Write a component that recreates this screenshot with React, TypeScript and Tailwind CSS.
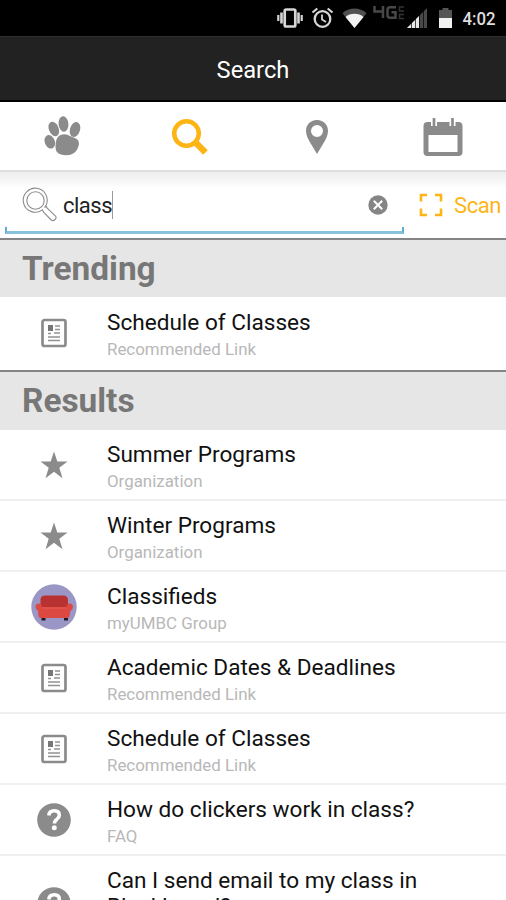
import React from "react";

function StatusBar() {
  return (
    <div className="flex h-9 shrink-0 items-center bg-black">
      <svg width="506" height="36" viewBox="0 0 506 36" fill="none">
        <g stroke="#d6d6d6">
          <rect x="284.700" y="9.500" width="10.600" height="17" rx="1.500" strokeWidth="2.700" />
          <path d="M281.500 12.500v11M298.500 12.500v11" strokeWidth="2.600" />
          <path d="M278.300 15v6M301.700 15v6" strokeWidth="2.200" />
          <circle cx="322.500" cy="19" r="7.800" strokeWidth="2.300" />
          <path d="M322 14.500v5l4 2.500" strokeWidth="1.800" />
          <path d="M312.500 12.500l4.800-4M332.500 12.500l-4.800-4" strokeWidth="2.200" />
        </g>
        <path d="M342.500 13.200C349 7 360 7 366.500 13.200L354.500 28Z" fill="#505050" />
        <path d="M345.500 17C350 12.800 359 12.800 363.500 17L354.500 28Z" fill="#f2f2f2" />
        <path d="M374.500 6v5.500h8.500M383 6v12" stroke="#484848" strokeWidth="2.500" />
        <path d="M396 7.200h-6q-2.500 0-2.500 2.500v5.500q0 2.500 2.500 2.500h5.500v-5.500h-4" stroke="#484848" strokeWidth="2.500" />
        <path d="M404 7h-4.500v4h4.500M404 14.500h-4.500v4h4.500" stroke="#343434" strokeWidth="1.500" />
        <path d="M407 28L427 8v20Z" fill="#484848" />
        <path d="M407 28L419 16v12Z" fill="#e8e8e8" />
        <path d="M411.500 20v8M415.500 16v12M419.500 12v16M423.500 9v19" stroke="#000" strokeWidth=".7" />
        <path d="M439 10h3.500V8h6v2h3.500v9h-13Z" fill="#555" />
        <path d="M439 18h13v10h-13Z" fill="#f0f0f0" />
        <text x="462.500" y="25" fill="#dedede" fontFamily="Roboto, sans-serif" fontWeight="500" fontSize="18" textLength="33" lengthAdjust="spacingAndGlyphs">4:02</text>
      </svg>
    </div>
  );
}

function Magnifier({ outlined = false }: { outlined?: boolean }) {
  if (outlined) {
    return (
      <svg className="ml-[22px] shrink-0" width="36" height="36" viewBox="0 0 36 36" fill="none" stroke="#8c8c8c" strokeWidth="1.100">
        <circle cx="13.500" cy="13.500" r="8.700" />
        <path d="M24.200 19.200L25.200 21.200 33.300 28.800Q35 30.500 33 32.500T29.300 33L21.700 25.300 20.300 22.900A12 12 0 1 1 22.600 20.700Z" />
      </svg>
    );
  }
  return (
    <svg width="38" height="38" viewBox="0 0 38 38" fill="none" stroke="#fdb515">
      <circle cx="15.500" cy="15.500" r="12.300" strokeWidth="4.500" />
      <path d="M24 24L34.500 34.500" strokeWidth="6.500" />
    </svg>
  );
}

function Tabs() {
  return (
    <nav className="grid h-[70px] shrink-0 grid-cols-4 border-b-2 border-[#dedede] bg-white">
      <div className="flex items-center justify-center">
        <svg width="38" height="40" viewBox="0 0 38 40" fill="#8b8b8b">
          <ellipse cx="19.500" cy="8" rx="4.900" ry="7.800" transform="rotate(-5 19.500 8)" />
          <ellipse cx="9.800" cy="13" rx="4.900" ry="7.600" transform="rotate(-22 9.800 13)" />
          <ellipse cx="31" cy="13.500" rx="5" ry="7.700" transform="rotate(17 31 13.500)" />
          <ellipse cx="5.800" cy="25.800" rx="5" ry="7" transform="rotate(-20 5.800 25.800)" />
          <path d="M15.500 19.500Q21.500 17 26 20L32 22.500Q35.500 24.500 34.800 29Q33.500 34.500 30 37Q25 40.500 17 38.500Q11.500 37 11.500 31Q11.500 22 15.500 19.500Z" />
        </svg>
      </div>
      <div className="flex items-center justify-center pt-[2px]"><Magnifier /></div>
      <div className="flex items-center justify-center pt-px pl-[2px]">
        <svg width="24" height="34" viewBox="0 0 24 34">
          <path fillRule="evenodd" fill="#8b8b8b" d="M12 0C5 0 1 5 1 11c0 4 2 8 5 13l6 10 6-10c3-5 5-9 5-13C23 5 19 0 12 0ZM12 5a6 6 0 1 1 0 12 6 6 0 0 1 0-12Z" />
        </svg>
      </div>
      <div className="flex items-center justify-center pt-[2px] pl-px">
        <svg width="40" height="40" viewBox="0 0 40 40">
          <path fillRule="evenodd" fill="#8b8b8b" d="M4.500 5h31q4 0 4 4v26q0 4-4 4h-31q-4 0-4-4V9q0-4 4-4ZM5.500 18v17h29V18Z" />
          <path d="M11 0v9M29.500 0v9" stroke="#fff" strokeWidth="6" />
          <path d="M11 1v8M29.500 1v8" stroke="#8b8b8b" strokeWidth="2.700" />
        </svg>
      </div>
    </nav>
  );
}

function SearchRow() {
  return (
    <div className="flex h-[66px] shrink-0 bg-linear-to-b from-[#ededed] to-white to-25%">
      <div className="flex h-[66px] w-[404px] shrink-0 flex-col pl-[5px]">
        <div className="flex h-[55px] items-center pt-[10px]">
          <div className="-ml-[5px]"><Magnifier outlined /></div>
          <span className="ml-[5px] pt-[2px] text-[22px] leading-7 tracking-[-0.500px]">class</span>
          <span className="h-7 w-px bg-[#999]" />
          <svg className="mr-4 ml-auto" width="20" height="20" viewBox="0 0 20 20">
            <circle cx="10" cy="10" r="9.700" fill="#858585" />
            <path d="M5.800 5.800l8.400 8.400M14.200 5.800l-8.400 8.400" stroke="#fff" strokeWidth="2" />
          </svg>
        </div>
        <div className="h-[7px] w-full border-x-2 border-b-[3px] border-x-[#5cadd0] border-b-[#88c1dc]" />
      </div>
      <div className="flex h-[66px] items-center pl-[15px] text-[#fdb515]">
        <svg width="24" height="24" viewBox="0 0 24 24" fill="none" stroke="currentColor" strokeWidth="2.600">
          <path d="M2 8.500V2h6M16 2h6v6.500M22 15.500V22h-6M8 22H2v-6.500" />
        </svg>
        <span className="ml-[11px] pt-[2px] text-[22px] leading-7 tracking-[-0.400px]">Scan</span>
      </div>
    </div>
  );
}

function SectionHeader({ children, tall }: { children: string; tall?: boolean }) {
  return (
    <h2 className={`flex shrink-0 items-center border-t-2 border-[#858588] bg-[#e6e6e6] pl-[22px] text-[33.400px] leading-[40px] font-bold text-[#777] ${tall ? "h-[60px]" : "h-[59px] pt-px"}`}>
      {children}
    </h2>
  );
}

type Kind = "link" | "star" | "sofa" | "faq";

function RowIcon({ kind }: { kind: Kind }) {
  switch (kind) {
    case "link":
      return (
        <svg width="26" height="30" viewBox="0 0 26 30" fill="none">
          <rect x="1.500" y="2" width="23" height="26" rx="2" stroke="#8b8b8b" strokeWidth="2.700" />
          <path d="M7 7h5v6H7Z" fill="#777" />
          <path d="M14 8h5M14 11.500h5M7 15.500h3M13 15h6M7 19h12M7 22.500h12" stroke="#929292" strokeWidth="1.700" />
        </svg>
      );
    case "star":
      return (
        <svg width="28" height="28" viewBox="0 0 28 28" fill="#8b8b8b">
          <path d="M14 .5l3.300 10h10.200l-8.200 6.200 3.200 10.500L14 20.800l-8.500 6.400 3.200-10.500L.5 10.500h10.200Z" />
        </svg>
      );
    case "sofa":
      return (
        <svg width="46" height="46" viewBox="0 0 46 46">
          <circle cx="23" cy="23" r="22.700" fill="#9a96c5" />
          <path d="M10.500 31h4v5.500h-4ZM33 31h4v5.500h-4Z" fill="#241c24" />
          <path d="M14 11.500h18.500q4 0 4.500 4V28H9.500V15.500q.4-4 4.500-4Z" fill="#b83232" />
          <path d="M10 23h26v5H10Z" fill="#e15349" />
          <path d="M4.500 23q0-3.500 3.500-3.500 3 0 3.300 5V25h23.900v-.5q.3-5 3.300-5 3.500 0 3.500 3.500 0 2-2.500 4L38.500 32q-.3 2-2 2h-27q-1.700 0-2-2l-.5-5Q4.500 25 4.500 23Z" fill="#dc4943" />
        </svg>
      );
    case "faq":
      return (
        <svg width="34" height="34" viewBox="0 0 34 34">
          <circle cx="17" cy="17" r="16.800" fill="#8b8b8b" />
          <path d="M11.800 12.500q.4-4.700 5.500-4.700 5 0 5 4.500 0 2.300-2.500 4.100-2.300 1.500-2.300 4" fill="none" stroke="#fff" strokeWidth="3.600" />
          <circle cx="17.300" cy="24.800" r="2.500" fill="#fff" />
        </svg>
      );
  }
}

function Row({ kind, title, subtitle, last }: { kind: Kind; title: string; subtitle: string; last?: boolean }) {
  return (
    <li className={`flex h-[71px] shrink-0 border-b-2 bg-white ${last ? "border-white" : "border-[#f0f0f0]"}`}>
      <div className="flex w-[107px] shrink-0 items-center justify-center pt-px"><RowIcon kind={kind} /></div>
      <div className="pt-[11px]">
        <div className="text-[22.600px] leading-[28px] text-[#111]">{title}</div>
        <div className="text-[16.900px] leading-6 text-[#b8b8b8]">{subtitle}</div>
      </div>
    </li>
  );
}

export default function App() {
  return (
    <main className="flex h-[900px] w-[506px] flex-col overflow-hidden bg-white font-[Roboto,sans-serif] text-[#222]">
      <StatusBar />
      <header className="flex h-[66px] shrink-0 items-center justify-center border-t border-b-2 border-t-[#303030] border-b-black bg-[#222] pt-[5px] text-[23.700px] text-white">Search</header>
      <Tabs />
      <SearchRow />
      <SectionHeader>Trending</SectionHeader>
      <ul className="h-[73px] shrink-0 pt-px"><Row kind="link" title="Schedule of Classes" subtitle="Recommended Link" last /></ul>
      <SectionHeader tall>Results</SectionHeader>
      <ul className="shrink-0">
        <Row kind="star" title="Summer Programs" subtitle="Organization" />
        <Row kind="star" title="Winter Programs" subtitle="Organization" />
        <Row kind="sofa" title="Classifieds" subtitle="myUMBC Group" />
        <Row kind="link" title="Academic Dates & Deadlines" subtitle="Recommended Link" />
        <Row kind="link" title="Schedule of Classes" subtitle="Recommended Link" />
        <Row kind="faq" title="How do clickers work in class?" subtitle="FAQ" />
        <li className="flex">
          <div className="flex w-[107px] shrink-0 justify-center pt-[31px]"><RowIcon kind="faq" /></div>
          <div className="w-[340px] pt-[12px] text-[22.600px] leading-[26px] text-[#111]">Can I send email to my class in Blackboard?</div>
        </li>
      </ul>
    </main>
  );
}
